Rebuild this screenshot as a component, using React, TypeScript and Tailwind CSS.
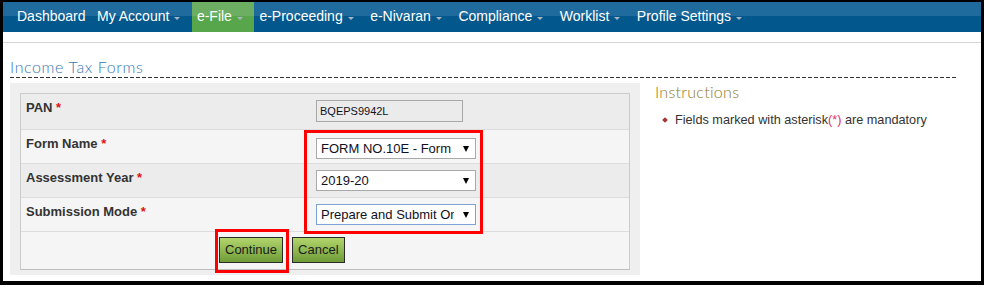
import React from "react";

const navItems: { label: string; caret: boolean; active?: boolean }[] = [
  { label: "Dashboard", caret: false },
  { label: "My Account", caret: true },
  { label: "e-File", caret: true, active: true },
  { label: "e-Proceeding", caret: true },
  { label: "e-Nivaran", caret: true },
  { label: "Compliance", caret: true },
  { label: "Worklist", caret: true },
  { label: "Profile Settings", caret: true },
];

function Caret() {
  return (
    <span className="ml-[5px] inline-block w-0 h-0 border-l-[3px] border-r-[3px] border-t-[3px] border-l-transparent border-r-transparent border-t-[#a9b6c2] mt-[2px]" />
  );
}

function SelectBox({ text, focused }: { text: string; focused?: boolean }) {
  return (
    <div
      className={`flex items-center w-[160px] h-[21px] bg-white border ${
        focused ? "border-[#7da2d6]" : "border-[#a9a9a9]"
      } pl-[4px] pr-[6px]`}
    >
      <div className="flex-1 overflow-hidden whitespace-nowrap text-[13px] leading-[15px] text-[#111122]">
        {text}
      </div>
      <span className="ml-[9px] inline-block w-0 h-0 border-l-[3px] border-r-[3px] border-t-[6px] border-l-transparent border-r-transparent border-t-black" />
    </div>
  );
}

function Label({ text }: { text: string }) {
  return (
    <div className="pl-[5px] pt-[6px] text-[13px] leading-[15px] font-bold text-[#333333]">
      {text} <span className="text-[#e01010]">*</span>
    </div>
  );
}

function Btn({ text }: { text: string }) {
  return (
    <div className="h-[26px] px-[5px] flex items-center border border-[#2a2a2a] bg-[linear-gradient(to_bottom,#b2d56c,#6f9c38)] text-[13px] text-[#1a1a1a]">
      {text}
    </div>
  );
}

export default function App() {
  return (
    <div className="relative w-[984px] h-[285px] overflow-hidden bg-white border-black border-t-2 border-l-[3px] border-r-[3px] border-b-4 font-['Liberation_Sans',Arial,sans-serif]">
      {/* top navigation */}
      <nav className="h-[30px] flex items-stretch pl-[9px] bg-[linear-gradient(to_bottom,#1f6b9e_0%,#1f6b9e_48%,#02578c_48%,#02578c_100%)] text-white text-[14px]">
        {navItems.map((it) => (
          <div
            key={it.label}
            className={`flex items-center pl-[5px] ${it.caret ? "pr-[11.5px]" : "pr-[6.5px]"} ${
              it.active
                ? "bg-[linear-gradient(to_bottom,#6cae62_0%,#6cae62_48%,#58a64c_48%,#58a64c_100%)]"
                : ""
            }`}
          >
            <span className="leading-[16px] -mt-[2px]">{it.label}</span>
            {it.caret && <Caret />}
          </div>
        ))}
      </nav>
      <div className="h-[11px] border-b border-[#d5d5d5]" />

      {/* title */}
      <div className="ml-[7px] mt-[14px] h-[20px] leading-[20px] text-[16px] font-light tracking-[0.6px] text-[#3b78b3] font-['Lato',sans-serif]">
        Income Tax Forms
      </div>
      <div className="ml-[7px] w-[948px] h-px bg-[repeating-linear-gradient(to_right,#333_0px,#333_4px,transparent_4px,transparent_6px)]" />

      {/* body */}
      <div className="flex items-start ml-[7px]">
        {/* form */}
        <div className="mt-[5px] w-[630px] bg-[#efefef] pt-[10px] px-[10px] pb-[5px]">
          <div className="border border-[#cbcbcb] border-b-[#bcbcbc]">
            <div className="h-[36px] grid grid-cols-[290px_1fr] bg-[#ececec] border-b border-[#dcdcdc]">
              <Label text="PAN" />
              <div className="pl-[5px] pt-[6px]">
                <div className="w-[147px] h-[22px] bg-[#ebebeb] border border-[#a8a8a8] flex items-center pl-[3px] text-[11px] text-[#111122]">
                  BQEPS9942L
                </div>
              </div>
            </div>
            <div className="h-[34px] grid grid-cols-[290px_1fr] bg-[#f5f5f5] border-b border-[#dcdcdc]">
              <Label text="Form Name" />
              <div className="pl-[5px] pt-[8px]">
                <SelectBox text="FORM NO.10E - Form 10E" />
              </div>
            </div>
            <div className="h-[34px] grid grid-cols-[290px_1fr] bg-[#ececec] border-b border-[#dcdcdc]">
              <Label text="Assessment Year" />
              <div className="pl-[5px] pt-[6px]">
                <SelectBox text="2019-20" />
              </div>
            </div>
            <div className="h-[34px] grid grid-cols-[290px_1fr] bg-[#f5f5f5] border-b border-[#dcdcdc]">
              <Label text="Submission Mode" />
              <div className="pl-[5px] pt-[6px]">
                <SelectBox text="Prepare and Submit Online" focused />
              </div>
            </div>
            <div className="h-[37px] bg-[#f5f5f5] flex items-start gap-[9px] pl-[198px] pt-[5px]">
              <Btn text="Continue" />
              <Btn text="Cancel" />
            </div>
          </div>
        </div>

        {/* instructions */}
        <div className="ml-[15px] mt-[4px]">
          <div className="h-[20px] leading-[20px] text-[16px] font-light tracking-[0.3px] text-[#8c7a26] font-['Lato',sans-serif]">
            Instructions
          </div>
          <div className="mt-[11px] ml-[8px] flex items-center">
            <span className="w-[4px] h-[4px] rotate-45 bg-[#a83434]" />
            <span className="ml-[8px] text-[12.7px] leading-[14px] text-[#333333]">
              Fields marked with asterisk<span className="text-[#e0306a]">(*)</span> are mandatory
            </span>
          </div>
        </div>
      </div>

      {/* red annotation boxes */}
      <div className="absolute left-[301px] top-[128px] w-[179px] h-[104px] border-[3px] border-[#ff0000]" />
      <div className="absolute left-[212px] top-[227px] w-[74px] h-[44px] border-[3px] border-[#ff0000]" />
    </div>
  );
}
